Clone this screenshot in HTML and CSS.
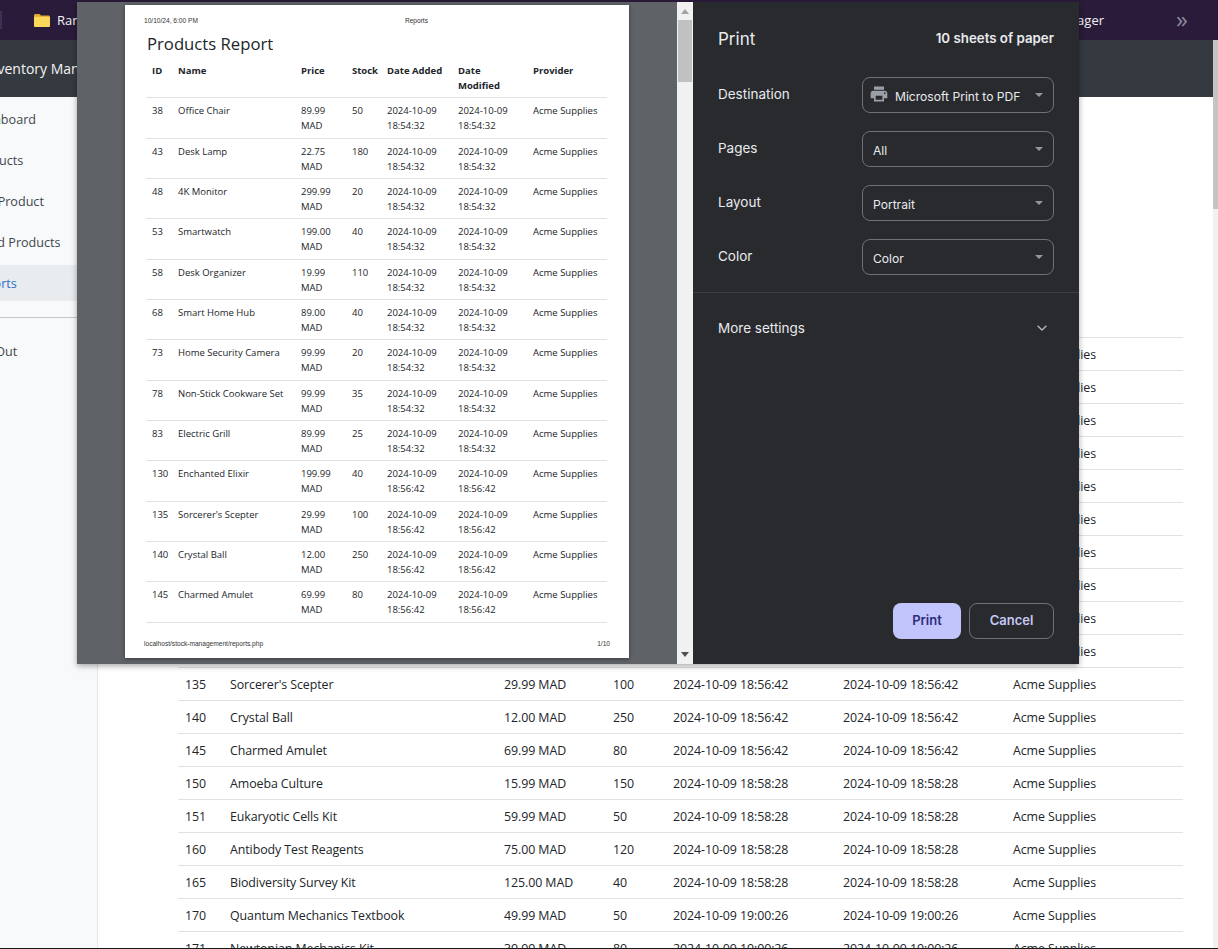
FILE: index.html
```html
<!DOCTYPE html>
<html lang="en">
<head>
    <meta charset="UTF-8">
    <meta name="viewport" content="width=device-width, initial-scale=1.0">
    <title>Reports</title>
    <link rel="stylesheet" href="styles.css">
</head>
<body>
    <div class="bookmarks">
        <span class="bookmark-stub"></span>
        <span class="bookmark">
            <svg class="folder" viewBox="0 0 16 13"><path fill="#e0a92e" d="M0 1.5C0 .7.7 0 1.5 0h4L7 1.6h7.5c.8 0 1.5.7 1.5 1.5v8.4c0 .8-.7 1.5-1.5 1.5h-13C.7 13 0 12.300 0 11.500z"/><path fill="#fbd75b" d="M0 4c0-.8.7-1.300 1.500-1.300h13c.8 0 1.500.5 1.500 1.300v7.500c0 .8-.7 1.500-1.500 1.500h-13C.7 13 0 12.300 0 11.500z"/></svg>
            Random
        </span>
        <span class="bookmark bookmark-last">Task Manager</span>
        <span class="bookmark-more">»</span>
    </div>

    <div class="window">
        <div class="page">
            <header class="navbar">Inventory Management</header>
            <div class="layout">
                <aside class="sidebar">
                    <a class="nav-link">Dashboard</a>
                    <a class="nav-link">Products</a>
                    <a class="nav-link">Add Product</a>
                    <a class="nav-link">Rated Products</a>
                    <a class="nav-link active">Reports</a>
                    <hr class="nav-rule">
                    <a class="nav-link">Log Out</a>
                </aside>
                <main class="content">
                    <table class="stock-table">
                        <colgroup>
                            <col class="c-id"><col class="c-name"><col class="c-price"><col class="c-stock"><col class="c-date"><col class="c-date"><col>
                        </colgroup>
                        <thead>
                            <tr><th>ID</th><th>Name</th><th>Price</th><th>Stock</th><th>Date Added</th><th>Date Modified</th><th>Provider</th></tr>
                        </thead>
                        <tbody>
                            <tr><td>38</td><td>Office Chair</td><td>89.99 MAD</td><td>50</td><td>2024-10-09 18:54:32</td><td>2024-10-09 18:54:32</td><td>Acme Supplies</td></tr>
                            <tr><td>43</td><td>Desk Lamp</td><td>22.75 MAD</td><td>180</td><td>2024-10-09 18:54:32</td><td>2024-10-09 18:54:32</td><td>Acme Supplies</td></tr>
                            <tr><td>48</td><td>4K Monitor</td><td>299.99 MAD</td><td>20</td><td>2024-10-09 18:54:32</td><td>2024-10-09 18:54:32</td><td>Acme Supplies</td></tr>
                            <tr><td>53</td><td>Smartwatch</td><td>199.00 MAD</td><td>40</td><td>2024-10-09 18:54:32</td><td>2024-10-09 18:54:32</td><td>Acme Supplies</td></tr>
                            <tr><td>58</td><td>Desk Organizer</td><td>19.99 MAD</td><td>110</td><td>2024-10-09 18:54:32</td><td>2024-10-09 18:54:32</td><td>Acme Supplies</td></tr>
                            <tr><td>68</td><td>Smart Home Hub</td><td>89.00 MAD</td><td>40</td><td>2024-10-09 18:54:32</td><td>2024-10-09 18:54:32</td><td>Acme Supplies</td></tr>
                            <tr><td>73</td><td>Home Security Camera</td><td>99.99 MAD</td><td>20</td><td>2024-10-09 18:54:32</td><td>2024-10-09 18:54:32</td><td>Acme Supplies</td></tr>
                            <tr><td>78</td><td>Non-Stick Cookware Set</td><td>99.99 MAD</td><td>35</td><td>2024-10-09 18:54:32</td><td>2024-10-09 18:54:32</td><td>Acme Supplies</td></tr>
                            <tr><td>83</td><td>Electric Grill</td><td>89.99 MAD</td><td>25</td><td>2024-10-09 18:54:32</td><td>2024-10-09 18:54:32</td><td>Acme Supplies</td></tr>
                            <tr><td>130</td><td>Enchanted Elixir</td><td>199.99 MAD</td><td>40</td><td>2024-10-09 18:56:42</td><td>2024-10-09 18:56:42</td><td>Acme Supplies</td></tr>
                            <tr><td>135</td><td>Sorcerer's Scepter</td><td>29.99 MAD</td><td>100</td><td>2024-10-09 18:56:42</td><td>2024-10-09 18:56:42</td><td>Acme Supplies</td></tr>
                            <tr><td>140</td><td>Crystal Ball</td><td>12.00 MAD</td><td>250</td><td>2024-10-09 18:56:42</td><td>2024-10-09 18:56:42</td><td>Acme Supplies</td></tr>
                            <tr><td>145</td><td>Charmed Amulet</td><td>69.99 MAD</td><td>80</td><td>2024-10-09 18:56:42</td><td>2024-10-09 18:56:42</td><td>Acme Supplies</td></tr>
                            <tr><td>150</td><td>Amoeba Culture</td><td>15.99 MAD</td><td>150</td><td>2024-10-09 18:58:28</td><td>2024-10-09 18:58:28</td><td>Acme Supplies</td></tr>
                            <tr><td>151</td><td>Eukaryotic Cells Kit</td><td>59.99 MAD</td><td>50</td><td>2024-10-09 18:58:28</td><td>2024-10-09 18:58:28</td><td>Acme Supplies</td></tr>
                            <tr><td>160</td><td>Antibody Test Reagents</td><td>75.00 MAD</td><td>120</td><td>2024-10-09 18:58:28</td><td>2024-10-09 18:58:28</td><td>Acme Supplies</td></tr>
                            <tr><td>165</td><td>Biodiversity Survey Kit</td><td>125.00 MAD</td><td>40</td><td>2024-10-09 18:58:28</td><td>2024-10-09 18:58:28</td><td>Acme Supplies</td></tr>
                            <tr><td>170</td><td>Quantum Mechanics Textbook</td><td>49.99 MAD</td><td>50</td><td>2024-10-09 19:00:26</td><td>2024-10-09 19:00:26</td><td>Acme Supplies</td></tr>
                            <tr><td>171</td><td>Newtonian Mechanics Kit</td><td>39.99 MAD</td><td>80</td><td>2024-10-09 19:00:26</td><td>2024-10-09 19:00:26</td><td>Acme Supplies</td></tr>
                        </tbody>
                    </table>
                </main>
            </div>
        </div>
        <div class="page-scroll"><div class="page-thumb"></div></div>
    </div>

    <div class="print-dialog">
        <div class="preview">
            <div class="sheet">
                <div class="sheet-meta">
                    <span>10/10/24, 6:00 PM</span>
                    <span class="sheet-title">Reports</span>
                </div>
                <h1 class="report-title">Products Report</h1>
                <table class="report-table">
                    <colgroup>
                        <col class="r-id"><col class="r-name"><col class="r-price"><col class="r-stock"><col class="r-added"><col class="r-mod"><col>
                    </colgroup>
                    <thead>
                        <tr><th>ID</th><th>Name</th><th>Price</th><th>Stock</th><th>Date Added</th><th>Date Modified</th><th>Provider</th></tr>
                    </thead>
                    <tbody>
                        <tr><td>38</td><td>Office Chair</td><td>89.99 MAD</td><td>50</td><td>2024-10-09 18:54:32</td><td>2024-10-09 18:54:32</td><td>Acme Supplies</td></tr>
                        <tr><td>43</td><td>Desk Lamp</td><td>22.75 MAD</td><td>180</td><td>2024-10-09 18:54:32</td><td>2024-10-09 18:54:32</td><td>Acme Supplies</td></tr>
                        <tr><td>48</td><td>4K Monitor</td><td>299.99 MAD</td><td>20</td><td>2024-10-09 18:54:32</td><td>2024-10-09 18:54:32</td><td>Acme Supplies</td></tr>
                        <tr><td>53</td><td>Smartwatch</td><td>199.00 MAD</td><td>40</td><td>2024-10-09 18:54:32</td><td>2024-10-09 18:54:32</td><td>Acme Supplies</td></tr>
                        <tr><td>58</td><td>Desk Organizer</td><td>19.99 MAD</td><td>110</td><td>2024-10-09 18:54:32</td><td>2024-10-09 18:54:32</td><td>Acme Supplies</td></tr>
                        <tr><td>68</td><td>Smart Home Hub</td><td>89.00 MAD</td><td>40</td><td>2024-10-09 18:54:32</td><td>2024-10-09 18:54:32</td><td>Acme Supplies</td></tr>
                        <tr><td>73</td><td>Home Security Camera</td><td>99.99 MAD</td><td>20</td><td>2024-10-09 18:54:32</td><td>2024-10-09 18:54:32</td><td>Acme Supplies</td></tr>
                        <tr><td>78</td><td>Non-Stick Cookware Set</td><td>99.99 MAD</td><td>35</td><td>2024-10-09 18:54:32</td><td>2024-10-09 18:54:32</td><td>Acme Supplies</td></tr>
                        <tr><td>83</td><td>Electric Grill</td><td>89.99 MAD</td><td>25</td><td>2024-10-09 18:54:32</td><td>2024-10-09 18:54:32</td><td>Acme Supplies</td></tr>
                        <tr><td>130</td><td>Enchanted Elixir</td><td>199.99 MAD</td><td>40</td><td>2024-10-09 18:56:42</td><td>2024-10-09 18:56:42</td><td>Acme Supplies</td></tr>
                        <tr><td>135</td><td>Sorcerer's Scepter</td><td>29.99 MAD</td><td>100</td><td>2024-10-09 18:56:42</td><td>2024-10-09 18:56:42</td><td>Acme Supplies</td></tr>
                        <tr><td>140</td><td>Crystal Ball</td><td>12.00 MAD</td><td>250</td><td>2024-10-09 18:56:42</td><td>2024-10-09 18:56:42</td><td>Acme Supplies</td></tr>
                        <tr><td>145</td><td>Charmed Amulet</td><td>69.99 MAD</td><td>80</td><td>2024-10-09 18:56:42</td><td>2024-10-09 18:56:42</td><td>Acme Supplies</td></tr>
                    </tbody>
                </table>
                <div class="sheet-foot">
                    <span>localhost/stock-management/reports.php</span>
                    <span>1/10</span>
                </div>
            </div>
        </div>

        <div class="preview-scroll">
            <svg class="arrow" viewBox="0 0 8 5"><path fill="#a3a3a3" d="M4 0l4 5H0z"/></svg>
            <div class="preview-thumb"></div>
            <svg class="arrow arrow-down" viewBox="0 0 8 5"><path fill="#505050" d="M0 0h8L4 5z"/></svg>
        </div>

        <div class="settings">
            <div class="settings-head">
                <span class="settings-title">Print</span>
                <span class="sheet-count">10 sheets of paper</span>
            </div>
            <div class="setting">
                <span class="setting-label">Destination</span>
                <div class="picker picker-dest">
                    <svg class="printer" viewBox="0 0 24 24"><path fill="#9aa0a6" d="M19 8H5c-1.660 0-3 1.340-3 3v6h4v4h12v-4h4v-6c0-1.660-1.340-3-3-3zm-3 11H8v-5h8v5zm3-7c-.55 0-1-.45-1-1s.45-1 1-1 1 .45 1 1-.45 1-1 1zm-1-9H6v4h12V3z"/></svg>
                    <span>Microsoft Print to PDF</span>
                </div>
            </div>
            <div class="setting">
                <span class="setting-label">Pages</span>
                <div class="picker"><span>All</span></div>
            </div>
            <div class="setting">
                <span class="setting-label">Layout</span>
                <div class="picker"><span>Portrait</span></div>
            </div>
            <div class="setting">
                <span class="setting-label">Color</span>
                <div class="picker"><span>Color</span></div>
            </div>
            <div class="more">
                <span>More settings</span>
                <svg class="chevron" viewBox="0 0 10 6"><path fill="none" stroke="#b5b7bb" stroke-width="1.300" d="M.6.7L5 5l4.400-4.300"/></svg>
            </div>
            <div class="actions">
                <button class="btn btn-print">Print</button>
                <button class="btn btn-cancel">Cancel</button>
            </div>
        </div>
    </div>
</body>
</html>
```

FILE: styles.css
```css
* {
    box-sizing: border-box;
}

html, body {
    margin: 0;
    padding: 0;
}

body {
    position: relative;
    display: flex;
    flex-direction: column;
    height: 949px;
    overflow: hidden;
    font-family: "Open Sans", "Noto Sans", sans-serif;
    background-color: #ffffff;
    color: #212529;
    border-bottom: 1px solid #1a1a1a;
}

/* browser bookmarks */
.bookmarks {
    display: flex;
    align-items: center;
    flex: 0 0 40px;
    background-color: #2b1b3b;
    color: #f2f2f2;
    font-size: 13px;
}

.bookmark-stub {
    width: 2px;
    height: 18px;
    margin-right: 32px;
    background-color: #3d3050;
}

.bookmark {
    display: flex;
    align-items: center;
    gap: 7px;
    white-space: nowrap;
}

.folder {
    width: 16px;
    height: 13px;
}

.bookmark-last {
    margin-left: auto;
}

.bookmark-more {
    width: 12px;
    margin: 0 30px 0 72px;
    padding-bottom: 3px;
    color: #8d8a9c;
    font-size: 24px;
    line-height: 1;
}

/* page under the dialog */
.window {
    display: flex;
    flex: 1;
    min-height: 0;
}

.page {
    display: flex;
    flex-direction: column;
    flex: 1;
    min-width: 0;
}

.page-scroll {
    flex: 0 0 5px;
    background-color: #f1f1f1;
}

.page-thumb {
    height: 169px;
    background-color: #c4c4c4;
}

.navbar {
    flex: 0 0 57px;
    text-indent: -15px;
    line-height: 57px;
    overflow: hidden;
    white-space: nowrap;
    background-color: #343a40;
    color: #f4f4f4;
    font-size: 14px;
}

.layout {
    display: flex;
    flex: 1;
    min-height: 0;
}

.sidebar {
    flex: 0 0 98px;
    padding-top: 4px;
    overflow: hidden;
    background-color: #f8f9fa;
    border-right: 1px solid #e4e6e8;
}

.nav-link {
    display: block;
    height: 36px;
    margin-bottom: 5px;
    text-indent: -29px;
    line-height: 38px;
    white-space: nowrap;
    color: #3f464d;
    font-size: 12.6px;
}

.nav-link.active {
    background-color: #e9ecef;
    color: #2f6fc4;
}

.nav-rule {
    margin: 16px 0 15px;
    border: 0;
    border-top: 1px solid #c4c7ca;
}

.content {
    flex: 1;
    min-width: 0;
    padding: 207px 30px 0 80px;
    overflow: hidden;
}

.stock-table {
    width: 1005px;
    table-layout: fixed;
    border-collapse: collapse;
    font-size: 12.4px;
    letter-spacing: -0.08px;
}

.stock-table th,
.stock-table td {
    height: 33px;
    padding: 2px 7px 0;
    text-align: left;
    white-space: nowrap;
    border-bottom: 1px solid #dee2e6;
}

.c-id { width: 45px; }
.c-name { width: 274px; }
.c-price { width: 109px; }
.c-stock { width: 60px; }
.c-date { width: 170px; }

/* print dialog */
.print-dialog {
    position: absolute;
    top: 2px;
    left: 77px;
    display: flex;
    width: 1002px;
    height: 662px;
    background-color: #292a2d;
    box-shadow: 0 2px 6px rgba(0, 0, 0, 0.35);
}

.preview {
    flex: 0 0 600px;
    padding: 3px 0 0 48px;
    overflow: hidden;
    background-color: #5f6368;
}

.sheet {
    display: flex;
    flex-direction: column;
    width: 504px;
    height: 653px;
    padding: 12px 19px 0;
    background-color: #ffffff;
    box-shadow: 0 1px 4px rgba(0, 0, 0, 0.4);
}

.sheet-meta,
.sheet-foot {
    display: flex;
    font-family: "Liberation Sans", Arial, sans-serif;
    font-size: 6.6px;
    line-height: 8px;
    color: #333333;
}

.sheet-title {
    margin-left: 207px;
}

.report-title {
    margin: 9px 0 3.5px 3px;
    font-size: 16.7px;
    font-weight: 500;
    line-height: 20px;
    color: #212529;
}

.report-table {
    width: 461px;
    margin: 0 0 0 2px;
    table-layout: fixed;
    border-collapse: collapse;
    font-size: 9.5px;
    line-height: 15px;
}

.report-table th,
.report-table td {
    height: 40.33px;
    padding: 5px 6px 4px;
    text-align: left;
    vertical-align: top;
    border-bottom: 1px solid #dee2e6;
}

.r-id { width: 26px; }
.r-name { width: 123px; }
.r-price { width: 51px; }
.r-stock { width: 35px; }
.r-added { width: 71px; }
.r-mod { width: 75px; }

.sheet-foot {
    justify-content: space-between;
    margin-top: 17px;
}

.preview-scroll {
    display: flex;
    flex-direction: column;
    align-items: center;
    flex: 0 0 16px;
    padding-top: 7px;
    background-color: #f1f1f1;
}

.arrow {
    width: 8px;
    height: 5px;
}

.preview-thumb {
    width: 14px;
    height: 62px;
    margin-top: 6px;
    background-color: #c1c1c1;
}

.arrow-down {
    margin-top: auto;
    margin-bottom: 7px;
}

.settings {
    display: flex;
    flex-direction: column;
    flex: 1;
    padding: 0 25px 25px;
    font-family: Inter, "Noto Sans", sans-serif;
    color: #e8eaed;
}

.settings-head {
    display: flex;
    align-items: center;
    justify-content: space-between;
    height: 72px;
    margin-bottom: 3px;
    padding-top: 2px;
}

.settings-title {
    font-size: 17px;
    font-weight: 400;
}

.sheet-count {
    margin-top: -2px;
    font-size: 13.3px;
    font-weight: 600;
}

.setting {
    display: flex;
    align-items: center;
    justify-content: space-between;
    margin-bottom: 18px;
    font-size: 13.5px;
}

.setting-label {
    margin-top: -2px;
}

.picker {
    position: relative;
    display: flex;
    align-items: center;
    width: 192px;
    height: 36px;
    padding: 2px 0 0 10px;
    border: 1px solid #6f7174;
    border-radius: 8px;
    font-size: 12.1px;
}

.picker::after {
    content: "";
    position: absolute;
    top: 15px;
    right: 10px;
    border-top: 4px solid #94969a;
    border-left: 4px solid transparent;
    border-right: 4px solid transparent;
}

.picker-dest {
    gap: 6px;
    padding-left: 6px;
}

.printer {
    width: 20px;
    height: 20px;
    margin-top: -5px;
}

.more {
    display: flex;
    align-items: center;
    justify-content: space-between;
    height: 72px;
    margin: -1px -25px 0;
    padding: 0 32px 2px 25px;
    border-top: 1px solid #3c3d41;
    font-size: 13.5px;
}

.chevron {
    width: 10px;
    height: 6px;
}

.actions {
    display: flex;
    justify-content: flex-end;
    gap: 8px;
    margin-top: auto;
}

.btn {
    height: 36px;
    padding-bottom: 3px;
    font-family: Inter, "Noto Sans", sans-serif;
    font-size: 13px;
    font-weight: 600;
    border-radius: 8px;
    cursor: pointer;
}

.btn-print {
    width: 68px;
    background-color: #c2c4fc;
    color: #2f2c7c;
    border: none;
}

.btn-cancel {
    width: 85px;
    background-color: transparent;
    color: #c6c8f4;
    border: 1px solid #6f7174;
}
```
